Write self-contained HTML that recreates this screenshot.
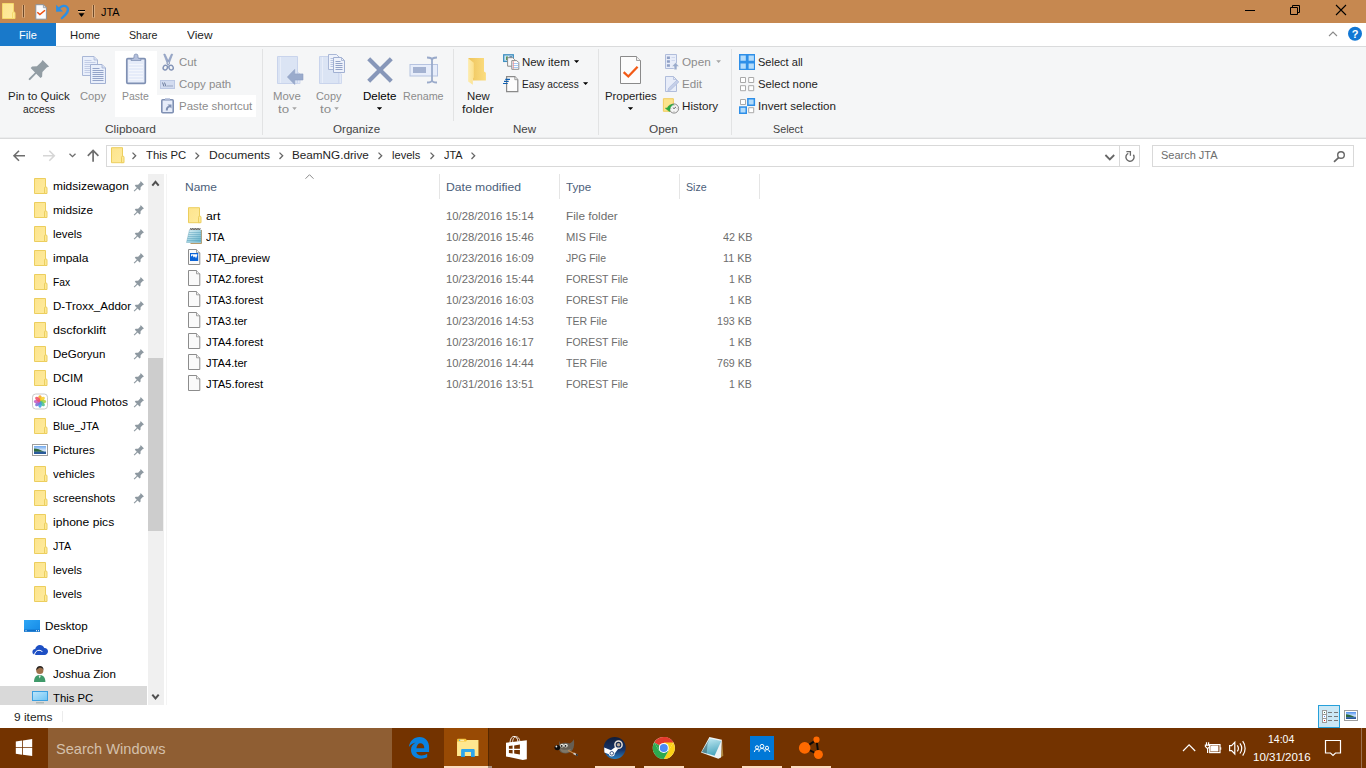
<!DOCTYPE html>
<html><head><meta charset="utf-8"><title>JTA</title>
<style>
*{box-sizing:border-box;margin:0;padding:0}
html,body{width:1366px;height:768px;overflow:hidden;background:#fff}
body{font-family:"Liberation Sans",sans-serif;font-size:11.5px;color:#000;position:relative}
.t{position:absolute;white-space:nowrap;line-height:14px;transform-origin:0 0}
.sep{position:absolute;width:1px;background:#e2e3e4;top:49px;height:86px}
.b{position:absolute}
svg{position:absolute;overflow:visible}
</style></head><body>
<div class="b" style="left:0;top:0;width:1366px;height:23px;background:#c68850"></div>
<div class="b" style="left:0;top:23px;width:56px;height:23px;background:#1979ca"></div>
<div class="b" style="left:0;top:46px;width:1366px;height:93px;background:#f5f6f7;border-bottom:1px solid #dadbdc"></div>
<div class="b" style="left:56px;top:46px;width:1310px;height:1px;background:#dadbdc"></div>
<div class="b" style="left:0;top:137px;width:1366px;height:1px;background:#ebeced"></div>
<div class="b" style="left:115px;top:51px;width:42px;height:66px;background:#fff"></div>
<div class="b" style="left:157px;top:95px;width:99px;height:22px;background:#fff"></div>
<div class="sep" style="left:262px"></div>
<div class="sep" style="left:453px;height:72px"></div>
<div class="sep" style="left:598px"></div>
<div class="sep" style="left:731px"></div>
<div class="b" style="left:106px;top:145px;width:1014px;height:22px;border:1px solid #d9d9d9"></div>
<div class="b" style="left:1119px;top:145px;width:21px;height:22px;border:1px solid #d9d9d9"></div>
<div class="b" style="left:1152px;top:145px;width:202px;height:22px;border:1px solid #d9d9d9"></div>
<div class="b" style="left:148px;top:174px;width:16px;height:531px;background:#f0f0f0"></div>
<div class="b" style="left:148px;top:358px;width:15px;height:173px;background:#cdcdcd"></div>
<div class="b" style="left:166px;top:174px;width:1px;height:531px;background:#f4f4f4"></div>
<div class="b" style="left:0;top:686px;width:147px;height:19px;background:#d9d9d9"></div>
<div class="b" style="left:439px;top:174px;width:1px;height:25px;background:#e5e5e5"></div>
<div class="b" style="left:559px;top:174px;width:1px;height:25px;background:#e5e5e5"></div>
<div class="b" style="left:679px;top:174px;width:1px;height:25px;background:#e5e5e5"></div>
<div class="b" style="left:759px;top:174px;width:1px;height:25px;background:#e5e5e5"></div>
<div class="b" style="left:62px;top:711px;width:1px;height:11px;background:#ececec"></div>
<div class="b" style="left:0;top:728px;width:1366px;height:40px;background:#733300"></div>
<div class="b" style="left:48px;top:728px;width:344px;height:40px;background:#8f5e33"></div>
<div class="t" style="left:100.5px;top:5px;color:#000;transform:scaleX(0.9480)">JTA</div>
<div class="t" style="left:19.2px;top:28px;color:#fff;transform:scaleX(0.9584)">File</div>
<div class="t" style="left:69.8px;top:28px;color:#1e1e1e;transform:scaleX(0.9805)">Home</div>
<div class="t" style="left:129.2px;top:28px;color:#1e1e1e;transform:scaleX(0.9284)">Share</div>
<div class="t" style="left:186.7px;top:28px;color:#1e1e1e;transform:scaleX(1.0299)">View</div>
<div class="t" style="left:7.8px;top:89px;color:#1e1e1e;transform:scaleX(0.9969)">Pin to Quick</div>
<div class="t" style="left:22.5px;top:102px;color:#1e1e1e;transform:scaleX(0.8908)">access</div>
<div class="t" style="left:79.9px;top:89px;color:#8c8c8c;transform:scaleX(0.9751)">Copy</div>
<div class="t" style="left:122.0px;top:89px;color:#8c8c8c;transform:scaleX(0.9076)">Paste</div>
<div class="t" style="left:178.9px;top:55px;color:#8c8c8c;transform:scaleX(0.9935)">Cut</div>
<div class="t" style="left:178.9px;top:77px;color:#8c8c8c;transform:scaleX(0.9959)">Copy path</div>
<div class="t" style="left:178.9px;top:99px;color:#8c8c8c;transform:scaleX(0.9962)">Paste shortcut</div>
<div class="t" style="left:272.8px;top:89px;color:#8c8c8c;transform:scaleX(0.9881)">Move</div>
<div class="t" style="left:277.5px;top:102px;color:#8c8c8c;transform:scaleX(1.1563)">to</div>
<div class="t" style="left:316.1px;top:89px;color:#8c8c8c;transform:scaleX(0.9453)">Copy</div>
<div class="t" style="left:319.5px;top:102px;color:#8c8c8c;transform:scaleX(1.1563)">to</div>
<div class="t" style="left:362.7px;top:89px;color:#000;transform:scaleX(1.0042)">Delete</div>
<div class="t" style="left:403.0px;top:89px;color:#8c8c8c;transform:scaleX(0.9338)">Rename</div>
<div class="t" style="left:467.1px;top:89px;color:#1e1e1e;transform:scaleX(0.9895)">New</div>
<div class="t" style="left:462.4px;top:102px;color:#1e1e1e;transform:scaleX(1.0983)">folder</div>
<div class="t" style="left:522.0px;top:55px;color:#1e1e1e;transform:scaleX(0.9948)">New item</div>
<div class="t" style="left:522.0px;top:77px;color:#1e1e1e;transform:scaleX(0.8783)">Easy access</div>
<div class="t" style="left:604.7px;top:89px;color:#1e1e1e;transform:scaleX(0.9882)">Properties</div>
<div class="t" style="left:681.9px;top:55px;color:#8c8c8c;transform:scaleX(1.0201)">Open</div>
<div class="t" style="left:681.9px;top:77px;color:#8c8c8c;transform:scaleX(1.0082)">Edit</div>
<div class="t" style="left:681.9px;top:99px;color:#1e1e1e;transform:scaleX(1.0110)">History</div>
<div class="t" style="left:757.8px;top:55px;color:#1e1e1e;transform:scaleX(0.9597)">Select all</div>
<div class="t" style="left:757.8px;top:77px;color:#1e1e1e;transform:scaleX(0.9847)">Select none</div>
<div class="t" style="left:757.8px;top:99px;color:#1e1e1e;transform:scaleX(1.0062)">Invert selection</div>
<div class="t" style="left:104.8px;top:122px;color:#444444;transform:scaleX(1.0357)">Clipboard</div>
<div class="t" style="left:332.8px;top:122px;color:#444444;transform:scaleX(1.0093)">Organize</div>
<div class="t" style="left:512.9px;top:122px;color:#444444;transform:scaleX(1.0069)">New</div>
<div class="t" style="left:648.9px;top:122px;color:#444444;transform:scaleX(1.0272)">Open</div>
<div class="t" style="left:772.8px;top:122px;color:#444444;transform:scaleX(0.9350)">Select</div>
<div class="t" style="left:145.9px;top:148px;color:#1e1e1e;transform:scaleX(0.9821)">This PC</div>
<div class="t" style="left:208.9px;top:148px;color:#1e1e1e;transform:scaleX(1.0488)">Documents</div>
<div class="t" style="left:292.3px;top:148px;color:#1e1e1e;transform:scaleX(1.0184)">BeamNG.drive</div>
<div class="t" style="left:391.9px;top:148px;color:#1e1e1e;transform:scaleX(0.9649)">levels</div>
<div class="t" style="left:443.5px;top:148px;color:#1e1e1e;transform:scaleX(0.9480)">JTA</div>
<div class="t" style="left:1160.5px;top:148px;color:#6d6d6d;transform:scaleX(0.9556)">Search JTA</div>
<div class="t" style="left:52.9px;top:179px;color:#000;transform:scaleX(1.0400)">midsizewagon</div>
<div class="t" style="left:52.9px;top:203px;color:#000;transform:scaleX(1.0280)">midsize</div>
<div class="t" style="left:52.9px;top:227px;color:#000;transform:scaleX(0.9853)">levels</div>
<div class="t" style="left:52.9px;top:251px;color:#000;transform:scaleX(1.0443)">impala</div>
<div class="t" style="left:52.9px;top:275px;color:#000;transform:scaleX(0.8958)">Fax</div>
<div class="t" style="left:52.9px;top:299px;color:#000;transform:scaleX(1.0083)">D-Troxx_Addor</div>
<div class="t" style="left:52.9px;top:323px;color:#000;transform:scaleX(1.0912)">dscforklift</div>
<div class="t" style="left:52.9px;top:347px;color:#000;transform:scaleX(0.9997)">DeGoryun</div>
<div class="t" style="left:52.9px;top:371px;color:#000;transform:scaleX(1.0165)">DCIM</div>
<div class="t" style="left:52.9px;top:395px;color:#000;transform:scaleX(1.0461)">iCloud Photos</div>
<div class="t" style="left:52.9px;top:419px;color:#000;transform:scaleX(0.9372)">Blue_JTA</div>
<div class="t" style="left:52.9px;top:443px;color:#000;transform:scaleX(1.0035)">Pictures</div>
<div class="t" style="left:52.9px;top:467px;color:#000;transform:scaleX(1.0031)">vehicles</div>
<div class="t" style="left:52.9px;top:491px;color:#000;transform:scaleX(1.0033)">screenshots</div>
<div class="t" style="left:52.9px;top:515px;color:#000;transform:scaleX(1.0519)">iphone pics</div>
<div class="t" style="left:52.5px;top:539px;color:#000;transform:scaleX(0.9276)">JTA</div>
<div class="t" style="left:52.9px;top:563px;color:#000;transform:scaleX(0.9853)">levels</div>
<div class="t" style="left:52.9px;top:587px;color:#000;transform:scaleX(0.9853)">levels</div>
<div class="t" style="left:44.8px;top:619px;color:#000;transform:scaleX(1.0143)">Desktop</div>
<div class="t" style="left:52.9px;top:643px;color:#000;transform:scaleX(1.0126)">OneDrive</div>
<div class="t" style="left:52.9px;top:667px;color:#000;transform:scaleX(1.0024)">Joshua Zion</div>
<div class="t" style="left:52.9px;top:691px;color:#000;transform:scaleX(0.9821)">This PC</div>
<div class="t" style="left:185.2px;top:180px;color:#4c607a;transform:scaleX(1.0425)">Name</div>
<div class="t" style="left:445.6px;top:180px;color:#4c607a;transform:scaleX(1.0586)">Date modified</div>
<div class="t" style="left:566.0px;top:180px;color:#4c607a;transform:scaleX(1.0102)">Type</div>
<div class="t" style="left:685.5px;top:180px;color:#4c607a;transform:scaleX(0.9240)">Size</div>
<div class="t" style="left:205.8px;top:209px;color:#000;transform:scaleX(1.0648)">art</div>
<div class="t" style="left:446.4px;top:209px;color:#6d6d6d;transform:scaleX(0.9792)">10/28/2016 15:14</div>
<div class="t" style="left:566.0px;top:209px;color:#6d6d6d;transform:scaleX(1.0256)">File folder</div>
<div class="t" style="left:205.8px;top:230px;color:#000;transform:scaleX(0.9429)">JTA</div>
<div class="t" style="left:446.4px;top:230px;color:#6d6d6d;transform:scaleX(0.9792)">10/28/2016 15:46</div>
<div class="t" style="left:566.0px;top:230px;color:#6d6d6d;transform:scaleX(0.9740)">MIS File</div>
<div class="t" style="left:722.5px;top:230px;color:#6d6d6d;transform:scaleX(0.9381)">42 KB</div>
<div class="t" style="left:205.8px;top:251px;color:#000;transform:scaleX(0.9720)">JTA_preview</div>
<div class="t" style="left:446.4px;top:251px;color:#6d6d6d;transform:scaleX(0.9792)">10/23/2016 16:09</div>
<div class="t" style="left:566.0px;top:251px;color:#6d6d6d;transform:scaleX(0.9066)">JPG File</div>
<div class="t" style="left:723.0px;top:251px;color:#6d6d6d;transform:scaleX(0.9482)">11 KB</div>
<div class="t" style="left:205.8px;top:272px;color:#000;transform:scaleX(0.9856)">JTA2.forest</div>
<div class="t" style="left:446.4px;top:272px;color:#6d6d6d;transform:scaleX(0.9792)">10/23/2016 15:44</div>
<div class="t" style="left:566.0px;top:272px;color:#6d6d6d;transform:scaleX(0.9118)">FOREST File</div>
<div class="t" style="left:729.1px;top:272px;color:#6d6d6d;transform:scaleX(0.9139)">1 KB</div>
<div class="t" style="left:205.8px;top:293px;color:#000;transform:scaleX(0.9856)">JTA3.forest</div>
<div class="t" style="left:446.4px;top:293px;color:#6d6d6d;transform:scaleX(0.9792)">10/23/2016 16:03</div>
<div class="t" style="left:566.0px;top:293px;color:#6d6d6d;transform:scaleX(0.9118)">FOREST File</div>
<div class="t" style="left:729.1px;top:293px;color:#6d6d6d;transform:scaleX(0.9139)">1 KB</div>
<div class="t" style="left:205.8px;top:314px;color:#000;transform:scaleX(0.9694)">JTA3.ter</div>
<div class="t" style="left:446.4px;top:314px;color:#6d6d6d;transform:scaleX(0.9792)">10/23/2016 14:53</div>
<div class="t" style="left:566.0px;top:314px;color:#6d6d6d;transform:scaleX(0.9179)">TER File</div>
<div class="t" style="left:717.0px;top:314px;color:#6d6d6d;transform:scaleX(0.9250)">193 KB</div>
<div class="t" style="left:205.8px;top:335px;color:#000;transform:scaleX(0.9856)">JTA4.forest</div>
<div class="t" style="left:446.4px;top:335px;color:#6d6d6d;transform:scaleX(0.9792)">10/23/2016 16:17</div>
<div class="t" style="left:566.0px;top:335px;color:#6d6d6d;transform:scaleX(0.9118)">FOREST File</div>
<div class="t" style="left:729.1px;top:335px;color:#6d6d6d;transform:scaleX(0.9139)">1 KB</div>
<div class="t" style="left:205.8px;top:356px;color:#000;transform:scaleX(0.9694)">JTA4.ter</div>
<div class="t" style="left:446.4px;top:356px;color:#6d6d6d;transform:scaleX(0.9792)">10/28/2016 14:44</div>
<div class="t" style="left:566.0px;top:356px;color:#6d6d6d;transform:scaleX(0.9179)">TER File</div>
<div class="t" style="left:717.0px;top:356px;color:#6d6d6d;transform:scaleX(0.9250)">769 KB</div>
<div class="t" style="left:205.8px;top:377px;color:#000;transform:scaleX(0.9856)">JTA5.forest</div>
<div class="t" style="left:446.4px;top:377px;color:#6d6d6d;transform:scaleX(0.9792)">10/31/2016 13:51</div>
<div class="t" style="left:566.0px;top:377px;color:#6d6d6d;transform:scaleX(0.9118)">FOREST File</div>
<div class="t" style="left:729.1px;top:377px;color:#6d6d6d;transform:scaleX(0.9139)">1 KB</div>
<div class="t" style="left:13.5px;top:710px;color:#1e1e1e;transform:scaleX(1.0385)">9 items</div>
<div class="t" style="left:55.7px;top:740px;color:#d4c0ab;transform:scaleX(0.9725);font-size:15px;line-height:18px">Search Windows</div>
<div class="t" style="left:1267.5px;top:732px;color:#fff;transform:scaleX(0.9139)">14:04</div>
<div class="t" style="left:1252.5px;top:750px;color:#fff;transform:scaleX(1.0013)">10/31/2016</div>
<!-- title bar icons -->
<svg style="left:0;top:0" width="130" height="23">
 <defs><linearGradient id="fg" x1="0" y1="0" x2="1" y2="1"><stop offset="0" stop-color="#fde48c"/><stop offset="1" stop-color="#feeb9e"/></linearGradient></defs>
 <path d="M2.500 3.500h11v15h-11z" fill="url(#fg)" stroke="#f5d96b"/>
 <path d="M12.500 18.500v-5.400a1.250 1.250 0 0 1 2.500 0v5.400z" fill="#fde995" stroke="#f5d96b"/>
 <rect x="22" y="4.700" width="3" height="13.300" rx="1.200" fill="#dcab7c"/><rect x="23" y="5" width="1" height="12.300" fill="#6e4a2a"/>
 <path d="M35.800 4.700h7.600l3 3v11.500h-10.600z" fill="#fbfbfc" stroke="#8b9299" stroke-width="1"/>
 <path d="M43.400 4.700v3h3z" fill="#e8eaee" stroke="#8b9299" stroke-width=".8"/>
 <path d="M37.300 12.300l2.600 2.300 5.100-4.400" fill="none" stroke="#ee4e0e" stroke-width="1.500"/>
 <path d="M59 8.600c2.300-3.200 6.500-3.800 8.400-1 2 3-.6 6-5.600 10.700" fill="none" stroke="#2b8fe5" stroke-width="2.200" stroke-linecap="round"/>
 <path d="M56.100 4.700v7.100l7-.4z" fill="#2b8fe5"/>
 <rect x="78" y="10" width="7" height="1.100" fill="#000"/><rect x="78" y="11.100" width="7" height="1" fill="#e9b88a"/>
 <path d="M78.500 13.200h6l-3 3.700z" fill="#000"/>
 <rect x="92" y="4.700" width="3" height="13.300" rx="1.200" fill="#dcab7c"/><rect x="93" y="5" width="1" height="12.300" fill="#6e4a2a"/>
</svg>
<!-- window controls -->
<svg style="left:1240px;top:0" width="126" height="46">
 <path d="M5 10.500h10" stroke="#000" stroke-width="1"/>
 <path d="M50.500 7.500h7v7h-7z M52.500 7.500v-2h7v7h-2" fill="none" stroke="#000" stroke-width="1"/>
 <path d="M96 5l10 10M106 5l-10 10" stroke="#000" stroke-width="1.100"/>
 <path d="M89 36l4-4 4 4" fill="none" stroke="#8a8a8a" stroke-width="1.100"/>
 <circle cx="115" cy="33.800" r="7" fill="#1277d4"/>
</svg>
<div class="t" style="left:1351.800px;top:27px;color:#fff;font-weight:bold;font-size:11px">?</div>
<!-- ribbon icons (page coordinates) -->
<svg style="left:0;top:0" width="1366" height="768" viewBox="0 0 1366 768">
 <defs>
  <linearGradient id="nf1" x1="0" y1="0" x2="1" y2="0"><stop offset="0" stop-color="#eec45c"/><stop offset="1" stop-color="#fbdd80"/></linearGradient>
  <linearGradient id="nf2" x1="0" y1="0" x2="1" y2="0"><stop offset="0" stop-color="#fdecb0"/><stop offset="1" stop-color="#fbe08c"/></linearGradient>
 </defs>
 <!-- pin -->
 <path d="M42.600 60l6.500 6.500-2.400 1-4.300 4.400-.3 4.800-1.600 1.400-4.300-4.300-6.300 6.400-1.300-.7.300-1 6.100-6.100-4.300-4.300 1.400-1.500 4.800-.3 4.400-4.400z" fill="#929da4"/>
 <!-- copy -->
 <g>
  <path d="M82.500 56.500h11.500l3.500 3.500v15.500h-15z" fill="#e9effb" stroke="#a9b7d6"/>
  <path d="M94 56.500v3.500h3.500" fill="#d5def2" stroke="#a9b7d6" stroke-width=".8"/>
  <path d="M84.500 60.500h7M84.500 62.500h11M84.500 64.500h6M84.500 66.500h6M84.500 68.500h6M84.500 70.500h6M84.500 72.500h6" stroke="#c3cde6" stroke-width="1"/>
  <path d="M90.500 64.500h11.500l3.500 3.500v15.500h-15z" fill="#e9effb" stroke="#a1b0d2"/>
  <path d="M102 64.500v3.500h3.500" fill="#d5def2" stroke="#a1b0d2" stroke-width=".8"/>
  <path d="M92.500 68.500h7M92.500 70.500h11M92.500 72.500h11M92.500 74.500h11M92.500 76.500h11M92.500 78.500h11M92.500 80.500h11" stroke="#93a3c8" stroke-width="1"/>
 </g>
 <!-- paste -->
 <g>
  <rect x="126.800" y="58.700" width="18.500" height="24.600" rx="1" fill="#e6ecf9" stroke="#7f90b3" stroke-width="1.700"/>
  <path d="M129 64.500h14M129 67.500h14M129 70.500h14M129 73.500h14M129 76.500h14M129 79.500h14" stroke="#f3f6fc" stroke-width="1.200"/>
  <path d="M134 58v-2a2 2 0 0 1 4 0v2l3 1.200v1.300h-10v-1.300z" fill="#b4c0dc" stroke="#8596b8" stroke-width=".8"/>
 </g>
 <!-- cut -->
 <path d="M163.700 54.300l1.300-.3 4.600 9.800-1.700 1.300zM172.700 54.300l-1.300-.3-4.600 9.800 1.700 1.300z" fill="#9dacce" stroke="#8394b7" stroke-width=".6"/>
 <g fill="none" stroke="#8394b7" stroke-width="1.400">
  <ellipse cx="165.300" cy="67.600" rx="2.100" ry="2.400" transform="rotate(25 165.300 67.600)"/>
  <ellipse cx="171.100" cy="67.600" rx="2.100" ry="2.400" transform="rotate(-25 171.100 67.600)"/>
 </g>
 <!-- copy path -->
 <rect x="160.500" y="80.500" width="14" height="8" fill="#d3dcf0" stroke="#bcc8e3"/>
 <path d="M162.500 82.500l1.500 4M164.500 82.500l1.500 4" stroke="#5f6f92" stroke-width=".9"/>
 <path d="M167.500 86h1M169.500 86h1M171.500 86h1" stroke="#5f6f92" stroke-width="1"/>
 <!-- paste shortcut -->
 <rect x="161.800" y="99.800" width="11.400" height="13" rx="1" fill="#e6ecf9" stroke="#7f90b3" stroke-width="1.600"/>
 <rect x="165" y="98.300" width="5" height="2" fill="#a9b6d4"/>
 <path d="M165.800 110.500c0-3 1-4.300 3.200-4.500l-1.500-1.500h4v4l-1.300-1.300c-1.600.1-2.400 1-2.400 3.300z" fill="#7f90b3"/>
 <!-- move to -->
 <path d="M277.500 56.500h20v27h-20z" fill="#dbe4f4" stroke="#c9d4ec"/>
 <path d="M280.500 57v26" stroke="#e9eef9" stroke-width="1"/>
 <path d="M297.500 72l2.500 2v9.500h-2.500z" fill="#e4eaf7" stroke="#c9d4ec" stroke-width=".8"/>
 <path d="M287.400 77l7.300-7.600v4.500h8.300v6.100h-8.300v4.500z" fill="#9aabcc" stroke="#8fa0c3" stroke-width=".6"/>
 <!-- copy to -->
 <path d="M319.500 56.500h19.500v27h-19.500z" fill="#dbe4f4" stroke="#c9d4ec"/>
 <path d="M322.500 57v26" stroke="#e9eef9" stroke-width="1"/>
 <path d="M339 72l2.500 2v9.500h-2.500z" fill="#e4eaf7" stroke="#c9d4ec" stroke-width=".8"/>
 <g>
  <path d="M328.500 54.500h8l3 3v12h-11z" fill="#eef2fb" stroke="#a9b7d6"/>
  <path d="M330.500 58.500h5M330.500 60.500h3M330.500 62.500h3M330.500 64.500h3M330.500 66.500h3" stroke="#b8c4e0"/>
  <path d="M333.500 57.500h8l3 3v12h-11z" fill="#eef2fb" stroke="#a1b0d2"/>
  <path d="M341.500 57.500v3h3" fill="none" stroke="#a1b0d2" stroke-width=".8"/>
  <path d="M335.500 61.500h5M335.500 63.500h7M335.500 65.500h7M335.500 67.500h7M335.500 69.500h7" stroke="#93a3c8"/>
 </g>
 <!-- delete -->
 <path d="M368.700 58.700l22.600 22.600M391.300 58.700l-22.600 22.600" stroke="#8797b9" stroke-width="4.200"/>
 <!-- rename -->
 <rect x="410" y="64.500" width="27.500" height="11.500" fill="#e7edfa" stroke="#b6c3e0"/>
 <rect x="413" y="67" width="13" height="6" fill="#a4b2d1"/>
 <path d="M427 57.500c3 0 5 .8 5 2.500c0-1.700 2-2.500 5-2.500M427 82.500c3 0 5-.8 5-2.500c0 1.700 2 2.500 5 2.500M432 59.500v21.500" fill="none" stroke="#9aaaca" stroke-width="1.800"/>
 <!-- new folder -->
 <path d="M468.300 58h15.700v13.500l1.900 1.300v7.800h-12.900z" fill="url(#nf1)"/>
 <path d="M468.100 58.250l5.700 4.450v14.800l-1 .8v6.500l-4.700-3.400z" fill="url(#nf2)"/>
 <!-- new item -->
 <rect x="503.700" y="54.800" width="9.600" height="6.600" fill="#cfe6f5" stroke="#3d8fc0" stroke-width="1.300"/>
 <rect x="506" y="56.500" width="2" height="3.500" fill="#5a9a5a"/><rect x="509.500" y="56.300" width="2.500" height="1.500" fill="#3d6f9f"/>
 <path d="M507.600 57.700h5.100l2 2v6.500h-7.100z" fill="#fafafa" stroke="#8c8c8c"/>
 <path d="M511.800 60.600h5l2 2v6.700h-7z" fill="#fff" stroke="#8c8c8c"/>
 <path d="M512.500 63.500h5.800M512.500 65.500h5.800M512.500 67.500h5.800" stroke="#9cc4f0" stroke-width=".9"/>
 <path d="M513.400 61.200v7.600" stroke="#f09090" stroke-width=".8"/>
 <!-- easy access -->
 <path d="M506.600 76.700h8.200l3 3v12h-11.200z" fill="#fcfcfc" stroke="#8a8a8a" stroke-width="1.200"/>
 <path d="M514.800 76.700v3h3" fill="#eee" stroke="#8a8a8a" stroke-width=".8"/>
 <path d="M505.300 79.300h4.700M504 81.400h4.700M503 83.500h4.700" stroke="#0f5fb0" stroke-width="1.200"/>
 <!-- properties -->
 <path d="M620.500 56.500h16l4 4v23h-20z" fill="#fcfcfc" stroke="#8a8a8a"/>
 <path d="M636.500 56.500v4h4" fill="#eee" stroke="#8a8a8a" stroke-width=".8"/>
 <path d="M623.700 72.200l4.600 4.300 9.300-9.700" fill="none" stroke="#f25a16" stroke-width="2.300"/>
 <!-- open -->
 <path d="M665.500 54.500h11v14h-11z" fill="#e8edf9" stroke="#b0bddb"/>
 <path d="M666.900 56.400h3v2.500h-3zM666.900 60.200h3v2.600h-3zM666.900 64.200h3v2.600h-3z" fill="#8fa0c5"/>
 <path d="M671.500 57.500h3.500M671.500 60.500h3.500" stroke="#cfd8ee"/>
 <path d="M675.500 62.600l3.700 3.900h-2.300v3.200h-2.800v-3.200h-2.300z" fill="#9aabcc" stroke="#f5f6f7" stroke-width=".5"/>
 <!-- edit -->
 <path d="M665.500 76.500h8l3 3v12h-11z" fill="#e8edf9" stroke="#b0bddb"/>
 <path d="M673.500 76.500v3h3" fill="none" stroke="#b0bddb" stroke-width=".8"/>
 <path d="M667.800 90.800l.9-2.800 8.300-8 1.900 1.900-8.300 8z" fill="#c5cfe8" stroke="#aebbdc" stroke-width=".7"/>
 <!-- history -->
 <path d="M663.400 98.700h10v12.600h-10z" fill="#fce38c" stroke="#f0cb52" stroke-width=".9"/>
 <circle cx="674" cy="108.500" r="4.600" fill="#f4f4f4" stroke="#8a8a8a" stroke-width="1"/>
 <path d="M674 105v.8M674 111.200v.8M670.500 108.500h.8M676.700 108.500h.8" stroke="#999" stroke-width=".7"/>
 <path d="M674 108.700l-1.200-1.200M674 108.700l2-1.800" fill="none" stroke="#444" stroke-width=".8"/>
 <path d="M665.300 108.200l4.300 3.400.3-2.300c.3-2.200 1.600-3.900 3.800-4.700-3-.6-5.400.9-6.300 3.300z" fill="#2bab3f" stroke="#1f9a35" stroke-width=".5"/>
 <!-- select all -->
 <rect x="739" y="54" width="16" height="16" fill="#2e8fe8"/>
 <path d="M740.500 55.500h5.300v5.200h-5.300zM748.600 55.500h5.300v5.200h-5.300zM740.500 63.500h5.300v5.200h-5.300zM748.600 63.500h5.300v5.200h-5.300z" fill="#b4dcfb"/>
 <!-- select none -->
 <path d="M740.500 77.500h5v5h-5zM748.700 77.500h5v5h-5zM740.500 85.700h5v5h-5zM748.700 85.700h5v5h-5z" fill="#fff" stroke="#a9a9a9"/>
 <!-- invert -->
 <path d="M740.500 99.500h5v5h-5zM748.700 107.700h5v5h-5z" fill="#fff" stroke="#a9a9a9"/>
 <rect x="747.100" y="98" width="8" height="8" fill="#2e8fe8"/><rect x="748.600" y="99.500" width="5" height="5" fill="#b4dcfb"/>
 <rect x="739" y="106.300" width="8" height="7.700" fill="#2e8fe8"/><rect x="740.500" y="107.800" width="5" height="4.700" fill="#b4dcfb"/>
 <!-- dropdown arrows -->
 <path d="M292.200 107.300h4.600l-2.300 2.600zM334.200 107.300h4.600l-2.300 2.600zM716.200 60.300h4.800l-2.400 2.700z" fill="#a6a6a6"/>
 <path d="M376.800 107.200h5.400l-2.700 2.900zM627.800 107.200h5.400l-2.700 2.900zM574 60.200h5.200l-2.600 2.900zM583 82.200h5.200l-2.600 2.900z" fill="#000"/>
</svg>
<!-- address/nav/file icons -->
<svg style="left:0;top:0" width="1366" height="768" viewBox="0 0 1366 768">
<defs>
<linearGradient id="fo" x1="0" y1="0" x2="1" y2="1"><stop offset="0" stop-color="#fde48c"/><stop offset="1" stop-color="#feeb9e"/></linearGradient>



</defs>
<path d="M25 155.800h-11.300M19 150.800l-5 5 5 5" fill="none" stroke="#6e6e6e" stroke-width="1.600"/>
<path d="M43 155.800h11.300M49.300 150.800l5 5-5 5" fill="none" stroke="#d6d6d6" stroke-width="1.600"/>
<path d="M69.500 153.700l3 3 3-3" fill="none" stroke="#6e6e6e" stroke-width="1.300"/>
<path d="M93.100 161.800v-11M87.800 155.800l5.300-5.300 5.300 5.300" fill="none" stroke="#6e6e6e" stroke-width="1.700"/>
<g transform="translate(111 147.200)"><path d="M.5.500h11v15h-11z" fill="url(#fo)" stroke="#ecce5e"/><path d="M10.500 15.500v-5.400a1.250 1.250 0 0 1 2.500 0v5.400z" fill="#fde995" stroke="#ecce5e"/></g>
<path d="M132.5 152.600l3.200 3.200-3.200 3.200" fill="none" stroke="#666" stroke-width="1.300"/>
<path d="M195.5 152.600l3.200 3.200-3.200 3.200" fill="none" stroke="#666" stroke-width="1.300"/>
<path d="M279.5 152.600l3.200 3.200-3.200 3.200" fill="none" stroke="#666" stroke-width="1.300"/>
<path d="M378.5 152.600l3.200 3.200-3.200 3.200" fill="none" stroke="#666" stroke-width="1.300"/>
<path d="M430.5 152.600l3.200 3.200-3.200 3.200" fill="none" stroke="#666" stroke-width="1.300"/>
<path d="M471.5 152.600l3.200 3.200-3.200 3.200" fill="none" stroke="#666" stroke-width="1.300"/>
<path d="M1105.400 155l4.400 4.400 4.400-4.400" fill="none" stroke="#666" stroke-width="1.800"/>
<path d="M1128.270 153.380a4.100 4.100 0 1 0 5.100 1.370" fill="none" stroke="#6b6b6b" stroke-width="1.400"/><path d="M1126.400 151.700h4v4" fill="none" stroke="#6b6b6b" stroke-width="1.300"/>
<circle cx="1341" cy="155" r="3.300" fill="none" stroke="#666" stroke-width="1.400"/><path d="M1338.600 157.600l-4.600 4.200" stroke="#666" stroke-width="1.700"/>
<path d="M305.500 178.700l4-4 4 4" fill="none" stroke="#8a8a8a" stroke-width="1"/>
<path d="M152.300 185.600l3.200-3.800 3.200 3.800" fill="none" stroke="#505050" stroke-width="2"/>
<path d="M152.300 694.600l3.200 3.800 3.200-3.800" fill="none" stroke="#505050" stroke-width="2"/>
<g transform="translate(34 178)"><path d="M.5.500h11v15h-11z" fill="url(#fo)" stroke="#ecce5e"/><path d="M10.500 15.500v-5.400a1.250 1.250 0 0 1 2.500 0v5.400z" fill="#fde995" stroke="#ecce5e"/></g>
<g transform="translate(134 181)"><path d="M6.600 0l3.400 3.400-1.200.6-2.200 2.200-.1 2.500-.9.800-2-2-3.100 3.100-.8-.8 3.100-3.100-2-2 .8-.9 2.500-.1 2.200-2.200z" fill="#8e99a1"/></g>
<g transform="translate(34 202)"><path d="M.5.500h11v15h-11z" fill="url(#fo)" stroke="#ecce5e"/><path d="M10.500 15.500v-5.400a1.250 1.250 0 0 1 2.500 0v5.400z" fill="#fde995" stroke="#ecce5e"/></g>
<g transform="translate(134 205)"><path d="M6.600 0l3.400 3.400-1.200.6-2.200 2.200-.1 2.500-.9.800-2-2-3.100 3.100-.8-.8 3.100-3.100-2-2 .8-.9 2.500-.1 2.200-2.200z" fill="#8e99a1"/></g>
<g transform="translate(34 226)"><path d="M.5.500h11v15h-11z" fill="url(#fo)" stroke="#ecce5e"/><path d="M10.500 15.500v-5.400a1.250 1.250 0 0 1 2.500 0v5.400z" fill="#fde995" stroke="#ecce5e"/></g>
<g transform="translate(134 229)"><path d="M6.600 0l3.400 3.400-1.200.6-2.200 2.200-.1 2.500-.9.800-2-2-3.100 3.100-.8-.8 3.100-3.100-2-2 .8-.9 2.500-.1 2.200-2.200z" fill="#8e99a1"/></g>
<g transform="translate(34 250)"><path d="M.5.500h11v15h-11z" fill="url(#fo)" stroke="#ecce5e"/><path d="M10.500 15.500v-5.400a1.250 1.250 0 0 1 2.500 0v5.400z" fill="#fde995" stroke="#ecce5e"/></g>
<g transform="translate(134 253)"><path d="M6.600 0l3.400 3.400-1.200.6-2.200 2.200-.1 2.500-.9.800-2-2-3.100 3.100-.8-.8 3.100-3.100-2-2 .8-.9 2.500-.1 2.200-2.200z" fill="#8e99a1"/></g>
<g transform="translate(34 274)"><path d="M.5.500h11v15h-11z" fill="url(#fo)" stroke="#ecce5e"/><path d="M10.500 15.500v-5.400a1.250 1.250 0 0 1 2.500 0v5.400z" fill="#fde995" stroke="#ecce5e"/></g>
<g transform="translate(134 277)"><path d="M6.600 0l3.400 3.400-1.200.6-2.200 2.200-.1 2.500-.9.800-2-2-3.100 3.100-.8-.8 3.100-3.100-2-2 .8-.9 2.500-.1 2.200-2.200z" fill="#8e99a1"/></g>
<g transform="translate(34 298)"><path d="M.5.500h11v15h-11z" fill="url(#fo)" stroke="#ecce5e"/><path d="M10.500 15.500v-5.400a1.250 1.250 0 0 1 2.500 0v5.400z" fill="#fde995" stroke="#ecce5e"/></g>
<g transform="translate(134 301)"><path d="M6.600 0l3.400 3.400-1.200.6-2.200 2.200-.1 2.500-.9.800-2-2-3.100 3.100-.8-.8 3.100-3.100-2-2 .8-.9 2.500-.1 2.200-2.200z" fill="#8e99a1"/></g>
<g transform="translate(34 322)"><path d="M.5.500h11v15h-11z" fill="url(#fo)" stroke="#ecce5e"/><path d="M10.500 15.500v-5.400a1.250 1.250 0 0 1 2.500 0v5.400z" fill="#fde995" stroke="#ecce5e"/></g>
<g transform="translate(134 325)"><path d="M6.600 0l3.400 3.400-1.200.6-2.200 2.200-.1 2.500-.9.800-2-2-3.100 3.100-.8-.8 3.100-3.100-2-2 .8-.9 2.500-.1 2.200-2.200z" fill="#8e99a1"/></g>
<g transform="translate(34 346)"><path d="M.5.500h11v15h-11z" fill="url(#fo)" stroke="#ecce5e"/><path d="M10.500 15.500v-5.400a1.250 1.250 0 0 1 2.500 0v5.400z" fill="#fde995" stroke="#ecce5e"/></g>
<g transform="translate(134 349)"><path d="M6.600 0l3.400 3.400-1.200.6-2.200 2.200-.1 2.500-.9.800-2-2-3.100 3.100-.8-.8 3.100-3.100-2-2 .8-.9 2.500-.1 2.200-2.200z" fill="#8e99a1"/></g>
<g transform="translate(34 370)"><path d="M.5.500h11v15h-11z" fill="url(#fo)" stroke="#ecce5e"/><path d="M10.500 15.500v-5.400a1.250 1.250 0 0 1 2.500 0v5.400z" fill="#fde995" stroke="#ecce5e"/></g>
<g transform="translate(134 373)"><path d="M6.600 0l3.400 3.400-1.200.6-2.200 2.200-.1 2.500-.9.800-2-2-3.100 3.100-.8-.8 3.100-3.100-2-2 .8-.9 2.500-.1 2.200-2.200z" fill="#8e99a1"/></g>
<g transform="translate(134 397)"><path d="M6.600 0l3.400 3.400-1.200.6-2.200 2.200-.1 2.500-.9.800-2-2-3.100 3.100-.8-.8 3.100-3.100-2-2 .8-.9 2.500-.1 2.200-2.200z" fill="#8e99a1"/></g>
<g transform="translate(34 418)"><path d="M.5.500h11v15h-11z" fill="url(#fo)" stroke="#ecce5e"/><path d="M10.500 15.500v-5.400a1.250 1.250 0 0 1 2.500 0v5.400z" fill="#fde995" stroke="#ecce5e"/></g>
<g transform="translate(134 421)"><path d="M6.600 0l3.400 3.400-1.200.6-2.200 2.200-.1 2.500-.9.800-2-2-3.100 3.100-.8-.8 3.100-3.100-2-2 .8-.9 2.500-.1 2.200-2.200z" fill="#8e99a1"/></g>
<g transform="translate(134 445)"><path d="M6.600 0l3.400 3.400-1.200.6-2.200 2.200-.1 2.500-.9.800-2-2-3.100 3.100-.8-.8 3.100-3.100-2-2 .8-.9 2.500-.1 2.200-2.200z" fill="#8e99a1"/></g>
<g transform="translate(34 466)"><path d="M.5.500h11v15h-11z" fill="url(#fo)" stroke="#ecce5e"/><path d="M10.500 15.500v-5.400a1.250 1.250 0 0 1 2.500 0v5.400z" fill="#fde995" stroke="#ecce5e"/></g>
<g transform="translate(134 469)"><path d="M6.600 0l3.400 3.400-1.200.6-2.200 2.200-.1 2.500-.9.800-2-2-3.100 3.100-.8-.8 3.100-3.100-2-2 .8-.9 2.500-.1 2.200-2.200z" fill="#8e99a1"/></g>
<g transform="translate(34 490)"><path d="M.5.500h11v15h-11z" fill="url(#fo)" stroke="#ecce5e"/><path d="M10.500 15.500v-5.400a1.250 1.250 0 0 1 2.500 0v5.400z" fill="#fde995" stroke="#ecce5e"/></g>
<g transform="translate(134 493)"><path d="M6.600 0l3.400 3.400-1.200.6-2.200 2.200-.1 2.500-.9.800-2-2-3.100 3.100-.8-.8 3.100-3.100-2-2 .8-.9 2.500-.1 2.200-2.200z" fill="#8e99a1"/></g>
<g transform="translate(34 514)"><path d="M.5.500h11v15h-11z" fill="url(#fo)" stroke="#ecce5e"/><path d="M10.500 15.500v-5.400a1.250 1.250 0 0 1 2.500 0v5.400z" fill="#fde995" stroke="#ecce5e"/></g>
<g transform="translate(34 538)"><path d="M.5.500h11v15h-11z" fill="url(#fo)" stroke="#ecce5e"/><path d="M10.500 15.500v-5.400a1.250 1.250 0 0 1 2.500 0v5.400z" fill="#fde995" stroke="#ecce5e"/></g>
<g transform="translate(34 562)"><path d="M.5.500h11v15h-11z" fill="url(#fo)" stroke="#ecce5e"/><path d="M10.500 15.500v-5.400a1.250 1.250 0 0 1 2.500 0v5.400z" fill="#fde995" stroke="#ecce5e"/></g>
<g transform="translate(34 586)"><path d="M.5.500h11v15h-11z" fill="url(#fo)" stroke="#ecce5e"/><path d="M10.500 15.500v-5.400a1.250 1.250 0 0 1 2.500 0v5.400z" fill="#fde995" stroke="#ecce5e"/></g>
<rect x="32.500" y="394.0" width="15" height="15" rx="3.200" fill="#fff" stroke="#c9c9c9"/>
<ellipse cx="40.00" cy="398.40" rx="1.800" ry="3.100" transform="rotate(0 40.00 398.40)" fill="#f6a623" fill-opacity=".88"/>
<ellipse cx="42.19" cy="399.31" rx="1.800" ry="3.100" transform="rotate(45 42.19 399.31)" fill="#f8d12a" fill-opacity=".88"/>
<ellipse cx="43.10" cy="401.50" rx="1.800" ry="3.100" transform="rotate(90 43.10 401.50)" fill="#a8d13c" fill-opacity=".88"/>
<ellipse cx="42.19" cy="403.69" rx="1.800" ry="3.100" transform="rotate(135 42.19 403.69)" fill="#4cc28c" fill-opacity=".88"/>
<ellipse cx="40.00" cy="404.60" rx="1.800" ry="3.100" transform="rotate(180 40.00 404.60)" fill="#3aa0e0" fill-opacity=".88"/>
<ellipse cx="37.81" cy="403.69" rx="1.800" ry="3.100" transform="rotate(225 37.81 403.69)" fill="#7a6fd8" fill-opacity=".88"/>
<ellipse cx="36.90" cy="401.50" rx="1.800" ry="3.100" transform="rotate(270 36.90 401.50)" fill="#c85fc0" fill-opacity=".88"/>
<ellipse cx="37.81" cy="399.31" rx="1.800" ry="3.100" transform="rotate(315 37.81 399.31)" fill="#f0506a" fill-opacity=".88"/>
<defs><linearGradient id="sky2" x1="0" y1="0" x2="0" y2="1"><stop offset="0" stop-color="#6fa8f0"/><stop offset=".55" stop-color="#d8e8f8"/><stop offset="1" stop-color="#2f5fa8"/></linearGradient></defs>
<rect x="32.500" y="444.5" width="15" height="11" fill="#fff" stroke="#9e9e9e"/>
<rect x="34" y="446" width="12" height="8" fill="url(#sky2)"/>
<path d="M34 448.5c3 0 6 1.200 10.500 3.300h-10.500z" fill="#2f6a3f"/>
<path d="M34 451.8h12v2.200h-12z" fill="#2a5a9a"/>
<defs><linearGradient id="dk" x1="0" y1="0" x2="1" y2="1"><stop offset="0" stop-color="#2ea6f5"/><stop offset="1" stop-color="#1489e6"/></linearGradient></defs>
<rect x="24" y="620" width="16" height="11.700" fill="url(#dk)"/><rect x="24" y="629.600" width="16" height="2.100" fill="#0f6fc8"/><path d="M25.500 630.700h1M36 630.700h1M38 630.700h1" stroke="#fff" stroke-width="1"/>
<path d="M36 655c-2.400 0-3.600-1.400-3.600-3 0-1.700 1.300-2.800 2.800-2.900.4-2.300 2.300-4 4.700-4 2 0 3.600 1.100 4.400 2.800 2-.2 3.700 1.300 3.700 3.400 0 2-1.500 3.700-3.500 3.700z" fill="#1d4fc4"/>
<path d="M34.500 655c.3-2.800 2-4.700 4.500-4.700 1.500 0 2.700.6 3.500 1.700" fill="none" stroke="#fff" stroke-width="1"/>
<path d="M34 682c0-4.500 2-7 5.600-7s5.800 2.500 5.800 7z" fill="#3f9a6a"/><path d="M38.500 675.500l1.200 3 1.200-3z" fill="#e8f0e8"/><circle cx="39.800" cy="670.500" r="3.600" fill="#a0714c"/><path d="M36.200 670.300c0-3 1.700-4.400 3.800-4.400s3.700 1.600 3.500 4c-1-1.700-2.500-2.200-4.500-2-.8.500-1.800 1.300-2.800 2.400z" fill="#2a2420"/>
<defs><linearGradient id="pc" x1="0" y1="0" x2="1" y2="1"><stop offset="0" stop-color="#bfe6fb"/><stop offset="1" stop-color="#6cc4f5"/></linearGradient></defs>
<rect x="32.500" y="691.500" width="15" height="9" fill="url(#pc)" stroke="#3b9fe0"/><rect x="36" y="702.300" width="8" height="1" fill="#9aa"/>
<g transform="translate(188 207.200)"><path d="M.5.500h11v15h-11z" fill="url(#fo)" stroke="#ecce5e"/><path d="M10.500 15.500v-5.400a1.250 1.250 0 0 1 2.500 0v5.400z" fill="#fde995" stroke="#ecce5e"/></g>
<defs><linearGradient id="np" x1="0" y1="0" x2="1" y2="1"><stop offset="0" stop-color="#e6f6fa"/><stop offset="1" stop-color="#62b1c9"/></linearGradient></defs>
<path d="M190.500 243.500h11v-13.500" fill="none" stroke="#b79a6a" stroke-width="1"/>
<path d="M189.500 229.800h11.500v12.700h-14.500z" fill="url(#np)" stroke="#86b9ca" stroke-width=".6"/>
<path d="M189 232.500h12M188.500 234.500h12.500M188 236.500h13M187.500 238.500h13.500M187 240.500h14" stroke="#4f9ab6" stroke-width=".7" opacity=".6"/>
<path d="M189.300 228.300h11.700v1.700h-11.700z" fill="#fff"/>
<path d="M190 230l.8-1.900.8 1.900.8-1.900.8 1.900.8-1.900.8 1.900.8-1.900.8 1.900.8-1.900.8 1.900.8-1.900.8 1.900.8-1.900" fill="none" stroke="#333" stroke-width=".6"/>
<g transform="translate(188 249)"><path d="M.5.500h8l3.300 3.300v11.700H.5z" fill="#fafafa" stroke="#8c8c8c"/><path d="M8.500.500v3.300h3.300" fill="#eee" stroke="#8c8c8c" stroke-width=".8"/></g>
<rect x="190" y="253" width="8.200" height="8" fill="#0b64d8"/><path d="M191 254.200h6.200v1.200l-1.200 3-1-2.200-1.200 1.200-1.300-2.200-1.500 1.500z" fill="#fff"/>
<g transform="translate(188 270)"><path d="M.5.500h8l3.300 3.300v11.700H.5z" fill="#fafafa" stroke="#8c8c8c"/><path d="M8.500.500v3.300h3.300" fill="#eee" stroke="#8c8c8c" stroke-width=".8"/></g>
<g transform="translate(188 291)"><path d="M.5.500h8l3.300 3.300v11.700H.5z" fill="#fafafa" stroke="#8c8c8c"/><path d="M8.500.500v3.300h3.300" fill="#eee" stroke="#8c8c8c" stroke-width=".8"/></g>
<g transform="translate(188 312)"><path d="M.5.500h8l3.300 3.300v11.700H.5z" fill="#fafafa" stroke="#8c8c8c"/><path d="M8.500.500v3.300h3.300" fill="#eee" stroke="#8c8c8c" stroke-width=".8"/></g>
<g transform="translate(188 333)"><path d="M.5.500h8l3.300 3.300v11.700H.5z" fill="#fafafa" stroke="#8c8c8c"/><path d="M8.500.500v3.300h3.300" fill="#eee" stroke="#8c8c8c" stroke-width=".8"/></g>
<g transform="translate(188 354)"><path d="M.5.500h8l3.300 3.300v11.700H.5z" fill="#fafafa" stroke="#8c8c8c"/><path d="M8.500.500v3.300h3.300" fill="#eee" stroke="#8c8c8c" stroke-width=".8"/></g>
<g transform="translate(188 375)"><path d="M.5.500h8l3.300 3.300v11.700H.5z" fill="#fafafa" stroke="#8c8c8c"/><path d="M8.500.500v3.300h3.300" fill="#eee" stroke="#8c8c8c" stroke-width=".8"/></g>
<rect x="1318.500" y="705.500" width="21" height="22" fill="#cce8f5" stroke="#26a0da"/>
<rect x="1322.500" y="710.500" width="4" height="12" fill="#fff" stroke="#9a9a9a"/>
<path d="M1322.500 714.500h4M1322.500 718.500h4" stroke="#9a9a9a" stroke-width="1"/>
<rect x="1324" y="712.0" width="1" height="1" fill="#3f7f5f"/>
<path d="M1328 712.5h4M1334 712.5h4" stroke="#7a7a7a" stroke-width="1"/>
<rect x="1324" y="716.0" width="1" height="1" fill="#4f8ff0"/>
<path d="M1328 716.5h4M1334 716.5h4" stroke="#7a7a7a" stroke-width="1"/>
<rect x="1324" y="720.0" width="1" height="1" fill="#e02020"/>
<path d="M1328 720.5h4M1334 720.5h4" stroke="#7a7a7a" stroke-width="1"/>
<defs><linearGradient id="sky" x1="0" y1="0" x2="0" y2="1"><stop offset="0" stop-color="#4f8ff0"/><stop offset=".55" stop-color="#cfe4fa"/><stop offset="1" stop-color="#2f5fa8"/></linearGradient></defs>
<rect x="1344.500" y="710.500" width="13" height="10" fill="#fff" stroke="#9e9e9e"/><rect x="1346" y="712" width="10" height="7" fill="url(#sky)"/><path d="M1346 714.300c2.500 0 5 1 8.500 2.700h-8.500z" fill="#2f6a3f"/><rect x="1346" y="717.300" width="10" height="1.700" fill="#2a5a9a"/>
</svg>
<!-- taskbar icons -->
<div style="position:absolute;left:444px;top:728px;width:44px;height:40px;background:#984a04"></div>
<div style="position:absolute;left:488px;top:728px;width:1px;height:40px;background:#552800"></div>
<div style="position:absolute;left:444px;top:766px;width:44px;height:2px;background:#fbdcc0"></div>
<div style="position:absolute;left:488px;top:766px;width:4px;height:2px;background:#a89080"></div>
<div style="position:absolute;left:595px;top:766px;width:40px;height:2px;background:#fbdcc0"></div>
<div style="position:absolute;left:644px;top:766px;width:40px;height:2px;background:#fbdcc0"></div>
<div style="position:absolute;left:742px;top:766px;width:40px;height:2px;background:#fbdcc0"></div>
<div style="position:absolute;left:791px;top:766px;width:40px;height:2px;background:#fbdcc0"></div>
<div style="position:absolute;left:1361px;top:728px;width:1px;height:40px;background:#9a7152"></div>
<svg style="left:0;top:0" width="1366" height="768" viewBox="0 0 1366 768">
 <!-- windows logo -->
 <path d="M15.800 741.400l6.300-.9v6.700h-6.300zM22.900 740.400l9.300-1.300v8.100h-9.300zM15.800 748h6.300v6.700l-6.300-.9zM22.900 748h9.300v8.100l-9.300-1.300z" fill="#fff"/>
 <!-- edge -->
 <path fill-rule="evenodd" d="M408.900 746.900C409.800 741 414 737.100 419.500 737.100C425.500 737.100 429.100 741.500 429.100 747.500V751.900H416.300C416.600 754.200 418.800 755.400 421.600 755.400C423.600 755.400 425.500 754.800 427.200 753.700V757.300C425.500 758.200 423.300 758.700 420.800 758.700C415 758.700 411 755.200 411 750C411 746.800 412.800 744.200 415.600 742.600C413 743.200 410.600 744.800 408.900 746.900ZM416.400 748.200H424.300C424.300 745 422.700 743.300 420.300 743.300C418.200 743.300 416.800 745.400 416.400 748.200Z" fill="#0a82e0"/>
 <!-- explorer -->
 <path d="M457.100 739.600c0-.5.400-.8.800-.8h7.700l1.200 1.200h11.500v16h-21.200z" fill="#f7c53a"/>
 <path d="M457.100 741.600h9l1-1.600h11.200v16h-21.200z" fill="#ffe78f"/>
 <rect x="459.300" y="739.800" width="4.800" height="1" fill="#fff3c4"/><rect x="459" y="739.700" width="1.200" height="1.200" fill="#4cc0d8"/>
 <path d="M461.100 756.900v-6.700c0-.8.500-1.300 1.300-1.300h11c.8 0 1.300.5 1.300 1.300v6.700h-3.700v-4.900h-6.200v4.900z" fill="#2ea6ec"/>
 <rect x="461.100" y="756" width="3.700" height=".9" fill="#1f95e0"/><rect x="471" y="756" width="3.700" height=".9" fill="#1f95e0"/>
 <!-- store -->
 <path d="M510 743c.2-4 1.800-6.600 4-6.600s3.800 2.200 4 5.400" fill="none" stroke="#fff" stroke-width="1"/>
 <path d="M512.500 742.500c.2-3.600 1.600-5.800 3.600-5.800s3.600 2 3.800 4.800" fill="none" stroke="#fff" stroke-width=".9" opacity=".85"/>
 <path d="M506 742.800l20.800-2.600v19.100l-4 .7-16.800-3.600z" fill="#fff"/>
 <path d="M508.900 746.100l3.700-.5v3.100h-3.700zM514.200 745.400l5.700-.8v4.100h-5.700zM508.900 750.100h3.700v3.300l-3.700-.5zM514.200 750.100h5.700v4.400l-5.700-.9z" fill="#733300"/>
 <!-- gimp -->
 <path d="M559.400 740.800l1.100 3.200c2.500-1.500 6.500-1.500 9-.5 2-1 3.500-2.500 4.300-4.300.7 3.800.5 7.800-1.300 10.800-2 3-6.500 4-10 3-2.500-.8-4-3-3.700-6z" fill="#655e53"/>
 <path d="M560 748.500c2.500 1.500 7 1.700 11 .3-.5 2-2.500 3.600-5 4-3 .4-5.500-1.300-6-4.300z" fill="#7f786a"/>
 <ellipse cx="557.300" cy="747.600" rx="2.800" ry="2.600" fill="#0c0c0c"/>
 <circle cx="556.400" cy="746.500" r=".9" fill="#e8e8e8"/>
 <circle cx="562" cy="745.600" r="1.900" fill="#ecebe3"/><circle cx="561.700" cy="745.900" r=".9" fill="#111"/>
 <circle cx="565.800" cy="745.600" r="1.900" fill="#ecebe3"/><circle cx="565.500" cy="745.900" r=".9" fill="#111"/>
 <path d="M568.200 750.500l5.500 2.800" fill="none" stroke="#c88a4a" stroke-width="1.100"/>
 <path d="M573.500 753.200l4.200 2.400" stroke="#cfcfcf" stroke-width="1.700"/><path d="M576 754.600l1.800 1" stroke="#222" stroke-width="1.700"/>
 <!-- steam -->
 <defs><linearGradient id="st" x1="0" y1="0" x2="0" y2="1"><stop offset="0" stop-color="#111d3a"/><stop offset=".6" stop-color="#17356a"/><stop offset="1" stop-color="#2a7fc0"/></linearGradient></defs>
 <circle cx="614.700" cy="747.900" r="11" fill="url(#st)"/>
 <circle cx="618.500" cy="744.700" r="3.600" fill="none" stroke="#e8e0d8" stroke-width="1.500"/>
 <circle cx="618.500" cy="744.700" r="1.700" fill="#b9a898"/>
 <path d="M604.200 747.500l6.800 2.800 4.300-3.300 2.800 2-3.400 4.400c.2 1.700-1.200 3.100-2.900 3.100-1.500 0-2.700-1-2.900-2.300l-4.500-1.800z" fill="#fff"/>
 <circle cx="611.800" cy="753.300" r="1.800" fill="none" stroke="#17356a" stroke-width=".8"/>
 <!-- chrome -->
 <circle cx="663.800" cy="747.900" r="11" fill="#fff"/>
 <path d="M663.800 747.900l-9.530-5.500a11 11 0 0 1 19.060 0z" fill="#e33b2e"/>
 <path d="M663.800 736.900a11 11 0 0 1 9.530 5.500h-9.530z" fill="#e33b2e"/>
 <path d="M673.330 742.400a11 11 0 0 1-9.530 16.500l4.760-8.250z" fill="#fcd116" />
 <path d="M673.330 742.400h-9.530l4.760 8.250z" fill="#fcd116"/>
 <path d="M654.270 742.400a11 11 0 0 0 9.530 16.500l4.760-8.250-9.520 0z" fill="#2da94f"/>
 <path d="M654.270 742.400l4.770 8.250 4.760-2.750z" fill="#2da94f"/>
 <circle cx="663.800" cy="747.900" r="5" fill="#fff"/>
 <circle cx="663.800" cy="747.900" r="4" fill="#4a8af4"/>
 <!-- notepad -->
 <defs><linearGradient id="nt" x1="0" y1="0" x2=".3" y2="1"><stop offset="0" stop-color="#c9eef6"/><stop offset="1" stop-color="#4fa8c0"/></linearGradient></defs>
 <path d="M722.100 740.300l1.200 15.500-2.300 1.500z" fill="#b08a40"/>
 <path d="M709.400 737l12.500 2.700-.9 17.800-2.700 1.200-17.300-6.300z" fill="#eef3f5"/>
 <path d="M709.800 738.600l11.500 2.500-6.700 14.700-12.800-3.800z" fill="url(#nt)"/>
 <path d="M709.800 738.600l-2.300 5.500-.8 9.400-4.900-1.500z" fill="#3d5f62" opacity=".55"/>
 <!-- people -->
 <rect x="750" y="736" width="24" height="24" fill="#0078d7"/>
 <g fill="none" stroke="#fff" stroke-width="1">
  <circle cx="757" cy="747.400" r="1.600"/><path d="M754.300 752c.4-1.800 1.200-2.700 2.700-2.700 1.100 0 1.800.4 2.300 1.200"/>
  <circle cx="767" cy="747.800" r="1.600"/><path d="M769.800 752c-.4-1.600-1.200-2.400-2.700-2.400-1.100 0-1.800.4-2.300 1.200"/>
  <circle cx="762" cy="746.300" r="1.900"/><path d="M758.800 751.800c.4-2.200 1.400-3.300 3.200-3.300s2.800 1.100 3.200 3.300"/>
 </g>
 <!-- orange -->
 <path d="M804.700 747.900l11.800-8.200 1.900 14.800z" fill="none" stroke="#0a0a0a" stroke-width="1.900"/>
 <circle cx="804.700" cy="747.900" r="5.800" fill="#ff6a00"/>
 <circle cx="816.500" cy="739.700" r="3.100" fill="#ff6a00"/>
 <circle cx="818.400" cy="754.500" r="4.500" fill="#ff6a00"/>
 <!-- tray -->
 <path d="M1183 751l6.100-6.200 6.100 6.200" fill="none" stroke="#fff" stroke-width="1.200"/>
 <g fill="none" stroke="#fff" stroke-width="1.200">
  <rect x="1209.700" y="744.600" width="10.300" height="8"/>
  <path d="M1220.700 747.200v2.600" stroke-width="1.100"/>
  <path d="M1206.500 742.200v3M1208.600 742.200v3"/>
  <path d="M1205.400 745.200h4.300v1.400l-2.100 2.100-2.200-2.100zM1207.600 748.600v4.400"/>
 </g>
 <path d="M1211.500 745.600h6.900v6h-8v-4.600z" fill="#fff"/>
 <g fill="none" stroke="#fff" stroke-width="1.200">
  <path d="M1229.600 745.600h2l3.200-3.400v11.800l-3.200-3.400h-2z"/>
  <path d="M1237.300 745.400a5 5 0 0 1 0 6M1239.900 743.300a8.500 8.500 0 0 1 0 10.200M1242.700 741.200a12 12 0 0 1 0 14.400"/>
 </g>
 <path d="M1325.500 740.500h15v12.500h-5l-2.500 2.500-2.500-2.500h-5z" fill="none" stroke="#fff" stroke-width="1.200"/>
</svg>
</body></html>
